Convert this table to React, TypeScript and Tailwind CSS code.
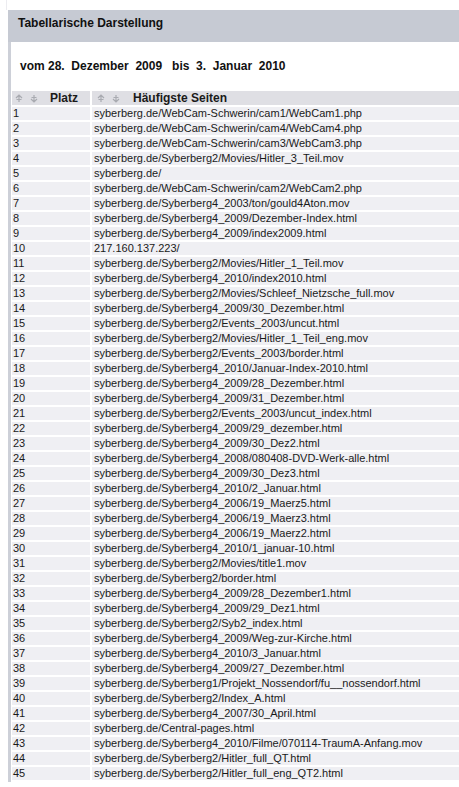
import React from "react";

const rows = [
  "syberberg.de/WebCam-Schwerin/cam1/WebCam1.php",
  "syberberg.de/WebCam-Schwerin/cam4/WebCam4.php",
  "syberberg.de/WebCam-Schwerin/cam3/WebCam3.php",
  "syberberg.de/Syberberg2/Movies/Hitler_3_Teil.mov",
  "syberberg.de/",
  "syberberg.de/WebCam-Schwerin/cam2/WebCam2.php",
  "syberberg.de/Syberberg4_2003/ton/gould4Aton.mov",
  "syberberg.de/Syberberg4_2009/Dezember-Index.html",
  "syberberg.de/Syberberg4_2009/index2009.html",
  "217.160.137.223/",
  "syberberg.de/Syberberg2/Movies/Hitler_1_Teil.mov",
  "syberberg.de/Syberberg4_2010/index2010.html",
  "syberberg.de/Syberberg2/Movies/Schleef_Nietzsche_full.mov",
  "syberberg.de/Syberberg4_2009/30_Dezember.html",
  "syberberg.de/Syberberg2/Events_2003/uncut.html",
  "syberberg.de/Syberberg2/Movies/Hitler_1_Teil_eng.mov",
  "syberberg.de/Syberberg2/Events_2003/border.html",
  "syberberg.de/Syberberg4_2010/Januar-Index-2010.html",
  "syberberg.de/Syberberg4_2009/28_Dezember.html",
  "syberberg.de/Syberberg4_2009/31_Dezember.html",
  "syberberg.de/Syberberg2/Events_2003/uncut_index.html",
  "syberberg.de/Syberberg4_2009/29_dezember.html",
  "syberberg.de/Syberberg4_2009/30_Dez2.html",
  "syberberg.de/Syberberg4_2008/080408-DVD-Werk-alle.html",
  "syberberg.de/Syberberg4_2009/30_Dez3.html",
  "syberberg.de/Syberberg4_2010/2_Januar.html",
  "syberberg.de/Syberberg4_2006/19_Maerz5.html",
  "syberberg.de/Syberberg4_2006/19_Maerz3.html",
  "syberberg.de/Syberberg4_2006/19_Maerz2.html",
  "syberberg.de/Syberberg4_2010/1_januar-10.html",
  "syberberg.de/Syberberg2/Movies/title1.mov",
  "syberberg.de/Syberberg2/border.html",
  "syberberg.de/Syberberg4_2009/28_Dezember1.html",
  "syberberg.de/Syberberg4_2009/29_Dez1.html",
  "syberberg.de/Syberberg2/Syb2_index.html",
  "syberberg.de/Syberberg4_2009/Weg-zur-Kirche.html",
  "syberberg.de/Syberberg4_2010/3_Januar.html",
  "syberberg.de/Syberberg4_2009/27_Dezember.html",
  "syberberg.de/Syberberg1/Projekt_Nossendorf/fu__nossendorf.html",
  "syberberg.de/Syberberg2/Index_A.html",
  "syberberg.de/Syberberg4_2007/30_April.html",
  "syberberg.de/Central-pages.html",
  "syberberg.de/Syberberg4_2010/Filme/070114-TraumA-Anfang.mov",
  "syberberg.de/Syberberg2/Hitler_full_QT.html",
  "syberberg.de/Syberberg2/Hitler_full_eng_QT2.html",
];

function Arrow({ down }: { down?: boolean }) {
  return (
    <svg width="8" height="9" viewBox="0 0 8 9" className="shrink-0">
      {down ? (
        <path d="M4 1 V8 M1 5 L4 8 L7 5 M1.5 3.5 H6.5" stroke="#a9abb1" strokeWidth="1.2" fill="none" />
      ) : (
        <path d="M4 8 V1 M1 4 L4 1 L7 4 M1.5 5.5 H6.5" stroke="#a9abb1" strokeWidth="1.2" fill="none" />
      )}
    </svg>
  );
}

export default function App() {
  return (
    <div
      className="w-[459px] h-[787px] bg-white overflow-hidden text-[#1a1a1a]"
      style={{ fontFamily: '"Liberation Sans", Arial, sans-serif' }}
    >
      <div className="h-[10px] ml-[6px] border-l border-[#ececf0]" />
      <div className="flex">
        <div className="w-[8px] shrink-0" />
        <div className="flex-1 min-w-0 flex flex-col">
          <div className="h-[32px] bg-[#c6cad3] flex items-center pl-[10px] pb-[6px] text-[12px] font-bold text-[#111]">
            Tabellarische Darstellung
          </div>
          <div className="flex">
            <div className="w-[3px] bg-[#cdd0d8] shrink-0" />
            <div className="w-[1px] shrink-0" />
            <div className="flex-1 min-w-0 pt-[16px]">
              <div className="h-[16px] pl-[8px] text-[12px] font-bold whitespace-pre leading-[16px] text-[#111]">
                vom 28.  Dezember  2009   bis  3.  Januar  2010
              </div>
              <div className="h-[17px]" />
              <div className="flex gap-[2px] h-[14px] mb-[2px]">
                <div className="w-[78px] shrink-0 bg-[#dfdfe4] flex items-center pl-[3px] gap-[7px]">
                  <Arrow />
                  <Arrow down />
                  <span className="ml-[5px] text-[12px] font-bold leading-[14px]">Platz</span>
                </div>
                <div className="flex-1 bg-[#dfdfe4] flex items-center pl-[5px] gap-[7px]">
                  <Arrow />
                  <Arrow down />
                  <span className="ml-[6px] text-[12px] font-bold leading-[14px] whitespace-nowrap">Häufigste Seiten</span>
                </div>
              </div>
              {rows.map((r, i) => (
                <div key={i} className="flex gap-[2px] h-[13px] mb-[2px] text-[11px] leading-[13px]">
                  <div className="w-[78px] shrink-0 bg-[#efeff3] pl-[1px]">{i + 1}</div>
                  <div className="flex-1 bg-[#efeff3] pl-[2px] whitespace-nowrap overflow-hidden">{r}</div>
                </div>
              ))}
            </div>
          </div>
        </div>
      </div>
    </div>
  );
}
